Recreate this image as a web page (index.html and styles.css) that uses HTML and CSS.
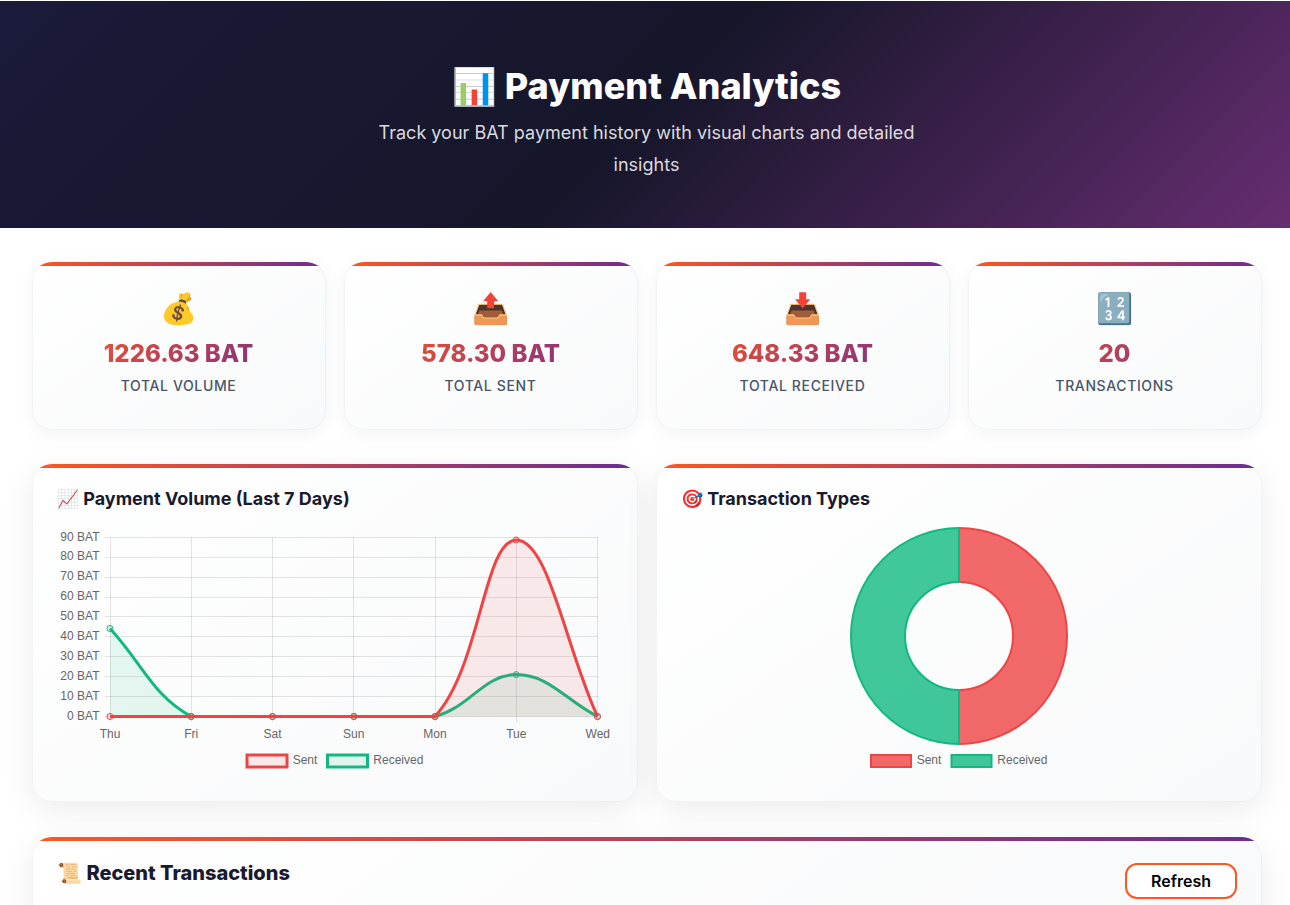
FILE: index.html
```html
<!DOCTYPE html>
<html lang="en">
<head>
    <meta charset="UTF-8">
    <meta name="viewport" content="width=device-width, initial-scale=1.0">
    <title>Payment Analytics</title>
    <link rel="stylesheet" href="styles.css">
</head>
<body>
    <header class="hero">
        <h1>📊 Payment Analytics</h1>
        <p>Track your BAT payment history with visual charts and detailed insights</p>
    </header>

    <main class="content">
        <section class="stats">
            <div class="card stat">
                <div class="stat-icon">💰</div>
                <div class="stat-value">1226.63 BAT</div>
                <div class="stat-label">Total Volume</div>
            </div>
            <div class="card stat">
                <div class="stat-icon">📤</div>
                <div class="stat-value">578.30 BAT</div>
                <div class="stat-label">Total Sent</div>
            </div>
            <div class="card stat">
                <div class="stat-icon">📥</div>
                <div class="stat-value">648.33 BAT</div>
                <div class="stat-label">Total Received</div>
            </div>
            <div class="card stat">
                <div class="stat-icon">🔢</div>
                <div class="stat-value">20</div>
                <div class="stat-label">Transactions</div>
            </div>
        </section>

        <section class="charts">
            <div class="card chart-card">
                <h3>📈 Payment Volume (Last 7 Days)</h3>
                <!-- viewBox origin is the card's inner corner: x 57, y 524 on the page -->
                <svg class="chart" viewBox="57 524 557 253" width="557" height="253">
                    <g class="grid">
                        <path d="M105 537.500H598M105 557.500H598M105 577.500H598M105 597.500H598M105 616.500H598M105 636.500H598M105 656.500H598M105 676.500H598M105 696.500H598M105 716.500H598"/>
                        <path d="M110.500 537V722M191.500 537V722M272.500 537V722M353.500 537V722M435.500 537V722M516.500 537V722M597.500 537V722"/>
                    </g>
                    <g class="tick">
                        <text x="99.500" y="541" text-anchor="end">90 BAT</text>
                        <text x="99.500" y="560" text-anchor="end">80 BAT</text>
                        <text x="99.500" y="580" text-anchor="end">70 BAT</text>
                        <text x="99.500" y="600" text-anchor="end">60 BAT</text>
                        <text x="99.500" y="620" text-anchor="end">50 BAT</text>
                        <text x="99.500" y="640" text-anchor="end">40 BAT</text>
                        <text x="99.500" y="660" text-anchor="end">30 BAT</text>
                        <text x="99.500" y="680" text-anchor="end">20 BAT</text>
                        <text x="99.500" y="700" text-anchor="end">10 BAT</text>
                        <text x="99.500" y="720" text-anchor="end">0 BAT</text>
                        <text x="110" y="738" text-anchor="middle">Thu</text>
                        <text x="191.200" y="738" text-anchor="middle">Fri</text>
                        <text x="272.500" y="738" text-anchor="middle">Sat</text>
                        <text x="353.800" y="738" text-anchor="middle">Sun</text>
                        <text x="435" y="738" text-anchor="middle">Mon</text>
                        <text x="516.300" y="738" text-anchor="middle">Tue</text>
                        <text x="597.800" y="738" text-anchor="middle">Wed</text>
                    </g>

                    <path class="fill-received" d="M110 628.500C142.500 663.700 152.500 695.500 191.200 716.500H435C469.400 707.600 483.700 674.600 516.200 674.600C548.700 674.600 565 699.700 597.500 716.500H110Z"/>
                    <path class="line-received" d="M110 628.500C142.500 663.700 152.500 695.500 191.200 716.500H435C469.400 707.600 483.700 674.600 516.200 674.600C548.700 674.600 565 699.700 597.500 716.500"/>
                    <g class="dot-received">
                        <circle cx="110" cy="628.500" r="3"/><circle cx="191.200" cy="716.500" r="3"/><circle cx="272.500" cy="716.500" r="3"/><circle cx="353.800" cy="716.500" r="3"/><circle cx="435" cy="716.500" r="3"/><circle cx="516.200" cy="674.600" r="3"/><circle cx="597.500" cy="716.500" r="3"/>
                    </g>

                    <path class="fill-sent" d="M110 716.500H435C480.900 666.700 483.700 540 516.200 540C548.700 540 565 645.900 597.500 716.500Z"/>
                    <path class="line-sent" d="M110 716.500H435C480.900 666.700 483.700 540 516.200 540C548.700 540 565 645.900 597.500 716.500"/>
                    <g class="dot-sent">
                        <circle cx="110" cy="716.500" r="3"/><circle cx="191.200" cy="716.500" r="3"/><circle cx="272.500" cy="716.500" r="3"/><circle cx="353.800" cy="716.500" r="3"/><circle cx="435" cy="716.500" r="3"/><circle cx="516.200" cy="540" r="3"/><circle cx="597.500" cy="716.500" r="3"/>
                    </g>

                    <rect class="swatch-sent-soft" x="247" y="755" width="40" height="12"/>
                    <text class="tick" x="292.700" y="764">Sent</text>
                    <rect class="swatch-received-soft" x="327.500" y="755" width="40" height="12"/>
                    <text class="tick" x="373.300" y="764">Received</text>
                </svg>
            </div>

            <div class="card chart-card">
                <h3>🎯 Transaction Types</h3>
                <svg class="chart" viewBox="681 524 557 253" width="557" height="253">
                    <path class="slice-sent" d="M959 528A108 108 0 0 1 959 744V690A54 54 0 0 0 959 582Z"/>
                    <path class="slice-received" d="M959 744A108 108 0 0 1 959 528V582A54 54 0 0 0 959 690Z"/>
                    <rect class="swatch-sent" x="871" y="755" width="40" height="12"/>
                    <text class="tick" x="916.700" y="764">Sent</text>
                    <rect class="swatch-received" x="951.500" y="755" width="40" height="12"/>
                    <text class="tick" x="997.300" y="764">Received</text>
                </svg>
            </div>
        </section>

        <section class="card history">
            <div class="history-head">
                <h2>📜 Recent Transactions</h2>
                <button type="button">Refresh</button>
            </div>
        </section>
    </main>
</body>
</html>
```

FILE: styles.css
```css
* {
    box-sizing: border-box;
}

body {
    font-family: Inter, "Noto Sans", sans-serif;
    margin: 0;
    background: #fff;
    color: #1a1a2e;
}

.hero {
    height: 227px;
    margin-top: 1px;
    padding: 62px 0 0 3px;
    text-align: center;
    color: #fff;
    background: linear-gradient(135deg, #1a1a3a 0%, #16162a 50%, #662d71 100%);
}

.hero h1 {
    margin: 0 0 8px;
    font-size: 36px;
    line-height: 46px;
    font-weight: 800;
}

.hero p {
    width: 600px;
    margin: 0 auto;
    padding: 0 30px;
    font-size: 18px;
    line-height: 32px;
    letter-spacing: 0.01px;
    color: rgba(255, 255, 255, 0.85);
}

.content {
    padding: 34px 28px 0 32px;
}

.card {
    position: relative;
    overflow: hidden;
    border-radius: 20px;
    background: linear-gradient(145deg, #fff, #f8f9fa);
    box-shadow: inset 0 0 0 1px rgba(0, 0, 0, 0.04), 0 4px 20px rgba(0, 0, 0, 0.05);
}

.card::before {
    content: "";
    position: absolute;
    top: 0;
    left: 0;
    right: 0;
    height: 4px;
    background: linear-gradient(90deg, #ff5722, #6a2c91);
}

.stats {
    display: grid;
    grid-template-columns: repeat(4, 1fr);
    gap: 18px;
    margin-bottom: 34px;
}

.stat {
    height: 168px;
    padding: 25px 26px 0 25px;
    text-align: center;
}

.stat-icon {
    font-size: 30px;
    line-height: 42px;
}

.stat-value {
    margin-top: 7px;
    font-size: 24px;
    line-height: 36px;
    font-weight: 800;
    background: linear-gradient(135deg, #ff5722, #6a2c91);
    -webkit-background-clip: text;
    background-clip: text;
    color: transparent;
}

.stat-label {
    margin-top: 4px;
    font-size: 14px;
    line-height: 20px;
    font-weight: 500;
    letter-spacing: 0.63px;
    text-transform: uppercase;
    color: #4a5568;
}

.charts {
    display: grid;
    grid-template-columns: repeat(2, 1fr);
    gap: 18px;
    margin-bottom: 35px;
}

.chart-card {
    height: 338px;
    padding: 23px 24px 0 25px;
    box-shadow: inset 0 0 0 1px rgba(0, 0, 0, 0.04), 0 8px 32px rgba(0, 0, 0, 0.08);
}

.chart-card h3 {
    margin: 0 0 13px;
    font-size: 18px;
    line-height: 24px;
    font-weight: 700;
}

.chart {
    display: block;
}

.grid path {
    fill: none;
    stroke: rgba(0, 0, 0, 0.1);
    stroke-width: 1;
}

.tick text,
text.tick {
    font-family: "Liberation Sans", Arial, sans-serif;
    font-size: 12px;
    fill: #666;
}

.fill-sent {
    fill: rgba(239, 68, 68, 0.1);
}

.fill-received {
    fill: rgba(16, 185, 129, 0.1);
}

.line-sent,
.line-received {
    fill: none;
    stroke-width: 3;
}

.line-sent {
    stroke: #ef4444;
}

.line-received {
    stroke: #10b981;
}

.dot-sent circle {
    fill: rgba(239, 68, 68, 0.1);
    stroke: #ef4444;
}

.dot-received circle {
    fill: rgba(16, 185, 129, 0.1);
    stroke: #10b981;
}

.swatch-sent-soft {
    fill: rgba(239, 68, 68, 0.1);
    stroke: #ef4444;
    stroke-width: 3;
}

.swatch-received-soft {
    fill: rgba(16, 185, 129, 0.1);
    stroke: #10b981;
    stroke-width: 3;
}

.slice-sent,
.swatch-sent {
    fill: rgba(239, 68, 68, 0.8);
    stroke: #ef4444;
    stroke-width: 2;
}

.slice-received,
.swatch-received {
    fill: rgba(16, 185, 129, 0.8);
    stroke: #10b981;
    stroke-width: 2;
}

.history {
    min-height: 120px;
    box-shadow: inset 0 0 0 1px rgba(0, 0, 0, 0.04), 0 8px 32px rgba(0, 0, 0, 0.08);
}

.history-head {
    display: flex;
    justify-content: space-between;
    align-items: flex-start;
    padding: 22px 25px 0;
}

.history-head h2 {
    margin: 0;
    font-size: 20px;
    line-height: 28px;
    font-weight: 800;
}

.history-head button {
    width: 112px;
    height: 36px;
    margin-top: 4px;
    border: 2px solid #ff5722;
    border-radius: 12px;
    background: #fff;
    color: #000;
    font-family: Inter, sans-serif;
    font-size: 16px;
    font-weight: 600;
    cursor: pointer;
}
```
